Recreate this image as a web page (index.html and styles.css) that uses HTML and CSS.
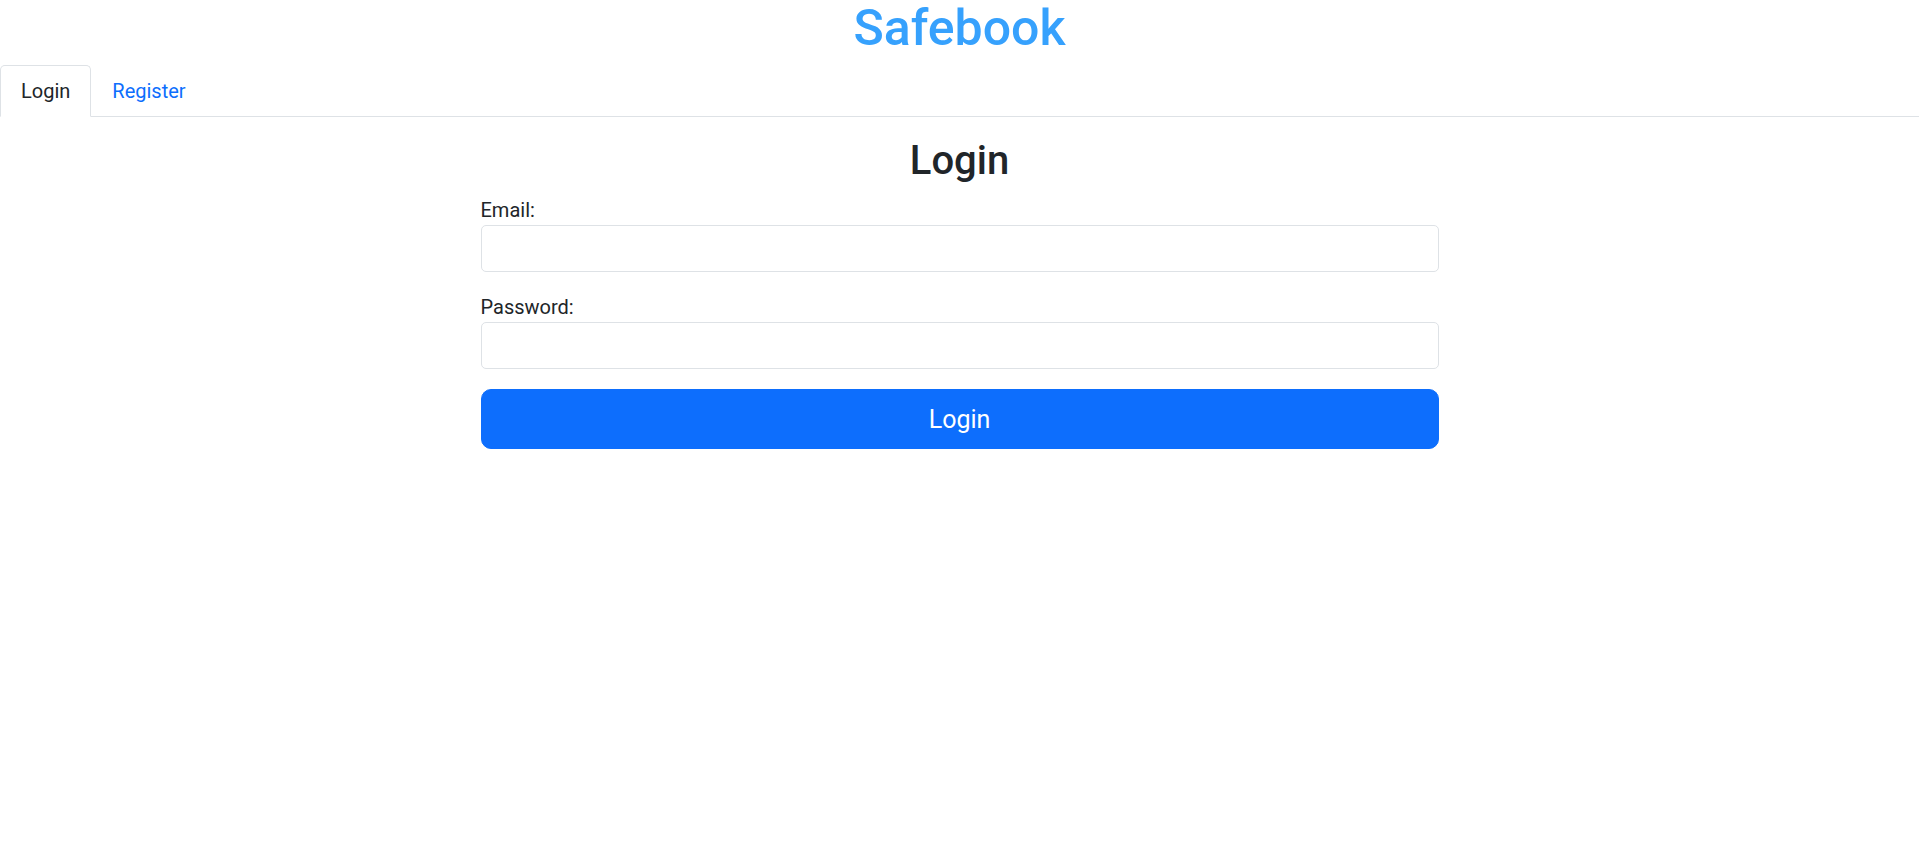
FILE: index.html
```html
<!DOCTYPE html>
<html lang="en">
<head>
<meta charset="utf-8">
<title>Safebook</title>
<link rel="stylesheet" href="styles.css">
</head>
<body>
<header class="site-header">
  <h1 class="brand">Safebook</h1>
</header>
<nav>
  <ul class="tabs">
    <li><a class="tab active" href="#">Login</a></li>
    <li><a class="tab" href="#">Register</a></li>
  </ul>
</nav>
<main class="panel">
  <h2 class="panel-title">Login</h2>
  <form class="form">
    <div class="field">
      <label class="label" for="email">Email:</label>
      <input class="input" id="email" type="email">
    </div>
    <div class="field">
      <label class="label" for="password">Password:</label>
      <input class="input" id="password" type="password">
    </div>
    <button class="btn" type="button">Login</button>
  </form>
</main>
</body>
</html>
```
FILE: styles.css
```css
* { box-sizing: border-box; }
html, body { margin: 0; padding: 0; }
body {
  font-family: Roboto, "Noto Sans", sans-serif;
  font-size: 20px;
  line-height: 1.5;
  color: #212529;
  background: #fff;
}
.site-header {
  height: 65px;
  text-align: center;
}
.brand {
  margin: 0;
  font-size: 50px;
  line-height: 56px;
  font-weight: 500;
  color: #36a1fd;
}
.tabs {
  list-style: none;
  margin: 0;
  padding: 0;
  display: flex;
  border-bottom: 1px solid #dee2e6;
}
.tab {
  display: block;
  padding: 10px 20px;
  margin-bottom: -1px;
  border: 1px solid transparent;
  border-radius: 5px 5px 0 0;
  color: #0d6efd;
  text-decoration: none;
}
.tab.active {
  color: #212529;
  background: #fff;
  border-color: #dee2e6 #dee2e6 #fff;
}
.panel {
  width: 958px;
  margin: 20px auto 0;
}
.panel-title {
  margin: 0 0 10px;
  text-align: center;
  font-size: 40px;
  line-height: 48px;
  font-weight: 500;
}
.field { margin-bottom: 20px; }
.label { display: block; }
.input {
  display: block;
  width: 100%;
  height: 47px;
  padding: 7px 15px;
  font: inherit;
  color: #212529;
  background: #fff;
  border: 1px solid #dee2e6;
  border-radius: 5px;
}
.btn {
  display: block;
  width: 100%;
  height: 60px;
  padding: 10px 20px;
  font-family: inherit;
  font-size: 25px;
  line-height: 37px;
  color: #fff;
  background: #0d6efd;
  border: 1px solid #0d6efd;
  border-radius: 10px;
  cursor: pointer;
}
```
